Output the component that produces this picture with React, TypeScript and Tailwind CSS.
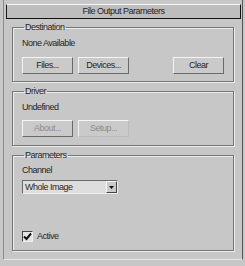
import React from 'react';

const font = "font-['Liberation_Sans',Arial,sans-serif] text-[9px] tracking-[-0.5px] leading-[11px]";

const Button: React.FC<{ label: string; disabled?: boolean; className?: string }> = ({ label, disabled, className }) => (
  <div
    className={`w-[51px] h-[17px] flex items-center justify-center bg-[#cacaca] border border-t-[#f4f4f4] border-l-[#f4f4f4] border-r-[#6a6a6a] border-b-[#6a6a6a] ${
      disabled ? 'text-[#8c8c8c]' : 'text-[#262626]'
    } ${className || ''}`}
  >
    {label}
  </div>
);

const Group: React.FC<{ title: string; className?: string; children: React.ReactNode }> = ({ title, className, children }) => (
  <fieldset className={`mx-[8px] border border-[#777777] shadow-[inset_1px_1px_0_#ebebeb,1px_1px_0_#ebebeb] pl-[9px] ${className || ''}`}>
    <legend className="ml-[2px] px-[1px] leading-[10px] text-[#262626]">{title}</legend>
    {children}
  </fieldset>
);

const App: React.FC = () => {
  return (
    <div className={`w-[245px] h-[266px] bg-[#c7c7c7] overflow-hidden ${font} text-[#262626]`}>
      <div className="ml-[3px] w-[240px] h-[260px] border-l border-l-[#8a8a8a] border-r border-r-[#555555] border-b border-b-[#e6e6e6] pt-[4px]">
        <div className="ml-[2px] w-[235px] h-[15px] bg-[#bdbdbd] border border-t-[#f6f6f6] border-l-[#1a1a1a] border-r-[#111111] border-b-[#111111] flex items-center justify-center">
          File Output Parameters
        </div>

        <Group title="Destination" className="mt-[3px] pt-[6px] pb-[7px]">
          <div>None Available</div>
          <div className="flex mt-[8px]">
            <Button label="Files..." />
            <Button label="Devices..." className="ml-[5px]" />
            <Button label="Clear" className="ml-[44px]" />
          </div>
        </Group>

        <Group title="Driver" className="mt-[4px] pt-[6px] pb-[8px]">
          <div>Undefined</div>
          <div className="flex mt-[7px]">
            <Button label="About..." disabled />
            <Button label="Setup..." disabled className="ml-[5px] border-r-[#bcbcbc] border-b-[#bcbcbc]" />
          </div>
        </Group>

        <Group title="Parameters" className="mt-[4px] pt-[5px] pb-[7px]">
          <div>Channel</div>
          <div className="mt-[4px] w-[96px] h-[14px] flex items-center bg-[#dedede] border border-t-[#6a6a6a] border-l-[#6a6a6a] border-r-[#f0f0f0] border-b-[#f0f0f0]">
            <span className="pl-[2px] flex-1">Whole Image</span>
            <div className="w-[11px] h-[12px] bg-[#cacaca] border border-t-[#f6f6f6] border-l-[#f6f6f6] border-r-[#444444] border-b-[#444444] flex items-center justify-center">
              <svg width="5" height="3" viewBox="0 0 5 3">
                <polygon points="0,0 5,0 2.5,3" fill="#111" />
              </svg>
            </div>
          </div>
          <div className="mt-[36px] flex items-center h-[13px]">
            <div className="w-[11px] h-[11px] bg-[#e4e4e4] border border-t-[#444444] border-l-[#444444] border-r-[#f0f0f0] border-b-[#f0f0f0] flex items-center justify-center">
              <svg width="9" height="9" viewBox="0 0 9 9">
                <path d="M1 4.5 L3.5 7 L8 1.5" stroke="#111" strokeWidth="2" fill="none" />
              </svg>
            </div>
            <span className="ml-[4px]">Active</span>
          </div>
        </Group>
      </div>
    </div>
  );
};

export default App;
